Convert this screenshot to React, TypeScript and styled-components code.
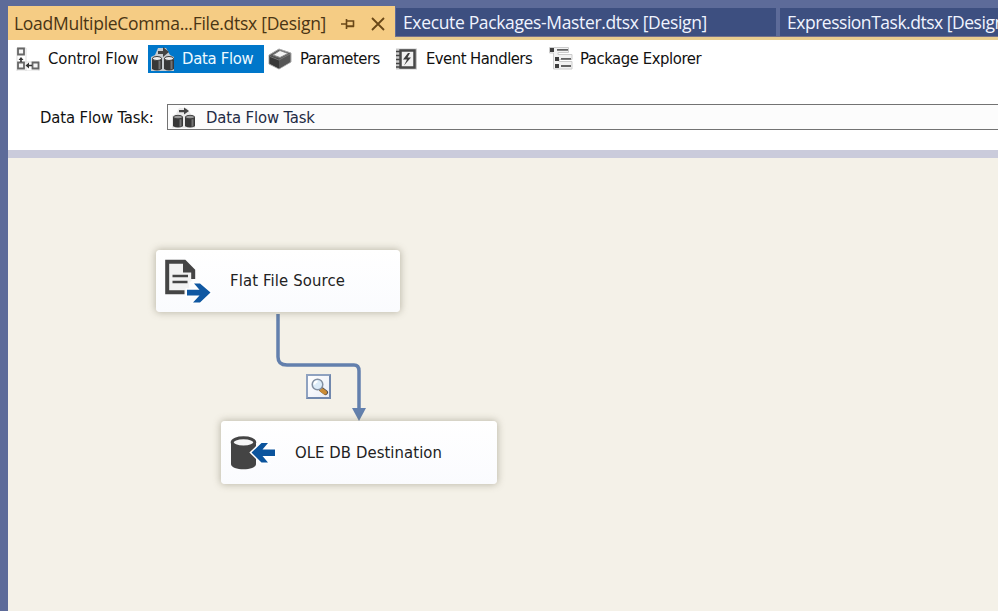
import React from 'react';
import styled, { createGlobalStyle } from 'styled-components';

const Global = createGlobalStyle`
  *{box-sizing:border-box}
  body{margin:0;overflow:hidden;background:#5d6b99}
  svg{display:block;flex:none}
`;
const Shell = styled.div`
  width:998px;height:611px;padding:6px 0 0 8px;overflow:hidden;
  display:flex;flex-direction:column;background:#5d6b99;
`;
const TabStrip = styled.header`
  height:34px;flex:none;display:flex;align-items:flex-start;
  background:linear-gradient(#5d6b99 30px,#75718a 30px,#75718a 31px,#e9cd8e 31px);
`;
const Tab = styled.div<{ $width: number; $active?: boolean; $gap?: number; $spacing: number }>`
  flex:none;width:${p => p.$width}px;height:${p => (p.$active ? 34 : 28)}px;
  margin-top:${p => (p.$active ? 0 : 2)}px;margin-right:${p => p.$gap ?? 0}px;
  padding-left:${p => (p.$active ? 6 : 7)}px;padding-bottom:${p => (p.$active ? 0 : 1)}px;
  display:flex;align-items:center;white-space:nowrap;
  background:${p => (p.$active ? '#f5cc84' : '#3d4f80')};
  color:${p => (p.$active ? '#4a3514' : '#f0f4ff')};
  font:17.5px/28px "Open Sans","Noto Sans",sans-serif;letter-spacing:${p => p.$spacing}px;
`;
const TabTitle = styled.span<{ $width?: number }>`width:${p => (p.$width ? p.$width + 'px' : 'auto')};flex:none;`;
const TabButtons = styled.div`display:flex;align-items:center;gap:15px;margin-left:13px;padding-top:1px;`;
const Header = styled.section`height:110px;flex:none;background:#fff;`;
const ViewBar = styled.nav`height:38px;padding-top:5px;display:flex;`;
const View = styled.div<{ $width: number; $pad: number; $gap: number; $spacing: number; $selected?: boolean }>`
  flex:none;width:${p => p.$width}px;height:28px;padding:0 0 1px ${p => p.$pad}px;
  display:flex;align-items:center;gap:${p => p.$gap}px;white-space:nowrap;
  background:${p => (p.$selected ? '#0077ca' : 'transparent')};color:${p => (p.$selected ? '#eefaff' : '#111')};
  font:16.5px/26px "DejaVu Sans Condensed","DejaVu Sans",sans-serif;letter-spacing:${p => p.$spacing}px;
`;
const TaskRow = styled.div`
  margin-top:26px;display:flex;align-items:center;padding-left:32px;color:#111;
  font:16.5px/24px "DejaVu Sans Condensed","DejaVu Sans",sans-serif;letter-spacing:-.12px;
`;
const TaskLabel = styled.label`width:127px;flex:none;padding-top:2px;`;
const TaskSelect = styled.div`
  flex:1;height:26px;border:1px solid #737373;border-right:0;background:#fcfcfc;
  padding:0 0 0 4px;display:flex;align-items:center;gap:10px;color:#1f2b45;
`;
const TaskName = styled.span`padding-top:2px;`;
const Splitter = styled.div`height:8px;flex:none;background:#cacbdb;`;
const Canvas = styled.main`position:relative;flex:1;background:#f4f1e8;`;
const Node = styled.div<{ $x: number; $y: number; $w: number; $h: number; $spacing: number }>`
  position:absolute;left:${p => p.$x}px;top:${p => p.$y}px;width:${p => p.$w}px;height:${p => p.$h}px;
  padding-left:8px;display:flex;align-items:center;gap:18px;border-radius:4px;
  background:linear-gradient(#fff,#fafbfe);box-shadow:0 0 7px 1px rgba(105,100,75,.38);color:#222;
  font:16.5px/24px "DejaVu Sans Condensed","DejaVu Sans",sans-serif;letter-spacing:${p => p.$spacing}px;
`;
const Link = styled.svg`position:absolute;left:265px;top:154px;`;
const Viewer = styled.div`
  position:absolute;left:298px;top:216px;width:25px;height:25px;
  border:2px solid #7188ad;border-top-color:#8fa2c0;border-left-color:#8fa2c0;background:linear-gradient(135deg,#fff,#e9edf6);
`;

const Pin = () => <svg width="15" height="12" viewBox="0 0 15 12" fill="none" stroke="#694717" strokeWidth="1.6"><path d="M0 6h5M5.5 1v10M5.5 3h7v5h-7M5.5 8.4h7.5" /></svg>;
const Close = () => <svg width="14" height="14" viewBox="0 0 14 14" stroke="#694717" strokeWidth="1.8"><path d="M1 1l12 12M13 1L1 13" /></svg>;
const ControlFlowIcon = () => (
  <svg width="24" height="24" viewBox="0 0 24 24" fill="none">
    <path d="M1 1h9v23M1 1v23h22v-9H9" stroke="#ddd" strokeWidth="1" />
    <g stroke="#666" strokeWidth="1.8"><path d="M2 1.500h6v6H2zM2 15.5h6v6H2zM16.5 15.5h6v6h-6z" fill="#f6f6f6" /></g>
    <path d="M5 15v-3M11 18.5h5" stroke="#333" strokeWidth="1.6" /><path d="M5 10l2.500 3h-5zM9.5 18.5l3.500-3v6z" fill="#333" />
  </svg>
);
const DataFlowIcon = ({ light }: { light?: boolean }) => (
  <svg width="24" height={light ? 24 : 21} viewBox="0 0 24 24" preserveAspectRatio="none">
    <path d="M0 10l4-2 3-7h8l4 7 4 2v14H0z" fill={light ? '#c8ccd0' : '#e9e9e9'} />
    <path d={light ? 'M7 7V4h5V0l6 5-6 5V7z' : 'M7 6V3.500h5V.500l5 4-5 4V6z'} fill="#444" />
    <path d="M1 11h10v11q-5 3-10 0zM13 11h10v11q-5 3-10 0z" fill="#383838" />
    <path d="M7.5 14h2v8l-2 .5zM19.500 14h2v8l-2 .5z" fill="#737373" />
    <g fill={light ? '#eee' : '#999'} stroke="#3c3c3c"><ellipse cx="6" cy="11.500" rx="4.500" ry="2" /><ellipse cx="18" cy="11.500" rx="4.500" ry="2" /></g>
  </svg>
);
const BoxIcon = () => (
  <svg width="24" height="22" viewBox="0 0 24 22" strokeLinejoin="round">
    <path d="M1 7L11 1l12 4v9l-12 7-10-5z" fill="#5d5d5d" stroke="#aaa" />
    <path d="M1.500 7.500L11 11v9.500l-9.500-5z" fill="#383838" /><path d="M11 11l11-5v8l-11 6.500z" fill="#565656" />
    <path d="M5 7l7-4.500 8 3-8 4z" fill="#f4f4f4" stroke="#888" /><path d="M2 8.500l9 3.500 11-6" fill="none" stroke="#777" />
  </svg>
);
const EventIcon = () => (
  <svg width="21" height="22" viewBox="0 0 21 22">
    <path d="M0 .5h21v21H0z" fill="#c9c9c9" /><path d="M4.500 2.500h14v17h-14z" fill="#f0f0f0" stroke="#474747" strokeWidth="2.500" />
    <path d="M0 3.500h4M0 7.500h4M0 11.500h4M0 15.500h4M0 19h4" stroke="#444" strokeWidth="1.500" />
    <path d="M12 5L7 11.500h4L8 17.500l7-8h-3.500L14 5z" fill="#3c3c3c" />
  </svg>
);
const ExplorerIcon = () => (
  <svg width="24" height="23" viewBox="0 0 24 23">
    <path d="M.5.5h19v5H9v2h14v5H10v2h13v7.500H4.500V6h-4z" fill="#f2f2f2" stroke="#ccc" />
    <path d="M1 1h4v4H1zM6 10h4v4H6zM6 17h4v4H6z" fill="#3e3e3e" />
    <path d="M8 2.800h11M12 11.800h10M12 19h10" stroke="#636363" strokeWidth="1.800" />
  </svg>
);
const FileIcon = () => (
  <svg width="48" height="46" viewBox="0 0 48 46">
    <path d="M3 3.500h17.500l9 9V21L25 25v11H3z" fill="#f3f3f3" />
    <path d="M20.500 34.200H3.200V3.700h17.300l8.700 8.800V21" fill="none" stroke="#454545" strokeWidth="4" />
    <path d="M19 2.500v12h12z" fill="#454545" /><path d="M8.500 18h15.500M8.500 24h15" stroke="#454545" strokeWidth="2.400" />
    <path d="M23 31.800h12.500L30 25.500h6L46.500 34.500 36 44.500h-7l6.500-7H23z" fill="#1058a2" stroke="#fff" strokeWidth="3" paintOrder="stroke" />
  </svg>
);
const DatabaseIcon = () => (
  <svg width="48" height="38" viewBox="0 0 48 38">
    <path d="M2 8v22c0 7 25 7 25 0V8" fill="#444" /><ellipse cx="14.500" cy="8.300" rx="11.300" ry="4.600" fill="#f6f6f6" stroke="#444" strokeWidth="3" />
    <path d="M46 15.500H33.500l5.500-6.500h-6.500L22.500 18.500 32.500 28.500h6.500l-5.500-6.500H46z" fill="#0b549d" stroke="#fff" strokeWidth="3" paintOrder="stroke" />
  </svg>
);
const Magnifier = () => (
  <svg width="21" height="21" viewBox="0 0 21 21">
    <path d="M13.500 13.500l4 3" stroke="#4f4a4d" strokeWidth="5" strokeLinecap="round" /><path d="M13.500 14l3.500 2.500" stroke="#cb8c35" strokeWidth="4" strokeLinecap="round" />
    <circle cx="9.500" cy="8.500" r="5.300" fill="#dcecf9" stroke="#8390a2" strokeWidth="1.500" /><path d="M6.500 8.500q0-3 3-3" stroke="#fff" strokeWidth="2" fill="none" />
  </svg>
);

export default function App() {
  return (
    <>
      <Global />
      <Shell>
        <TabStrip>
          <Tab $active $width={387} $gap={1} $spacing={-0.27}>
            <TabTitle $width={314}>LoadMultipleComma...File.dtsx [Design]</TabTitle>
            <TabButtons><Pin /><Close /></TabButtons>
          </Tab>
          <Tab $width={380} $gap={4} $spacing={-0.35}><TabTitle>Execute Packages-Master.dtsx [Design]</TabTitle></Tab>
          <Tab $width={230} $spacing={-0.48}><TabTitle>ExpressionTask.dtsx [Design]</TabTitle></Tab>
        </TabStrip>
        <Header>
          <ViewBar>
            <View $width={140} $pad={8} $gap={8} $spacing={-0.15}><ControlFlowIcon />Control Flow</View>
            <View $selected $width={116} $pad={3} $gap={7} $spacing={-0.3}><DataFlowIcon light />Data Flow</View>
            <View $width={131} $pad={4} $gap={8} $spacing={-0.52}><BoxIcon />Parameters</View>
            <View $width={154} $pad={1} $gap={9} $spacing={-0.52}><EventIcon />Event Handlers</View>
            <View $width={170} $pad={0} $gap={7} $spacing={-0.42}><ExplorerIcon />Package Explorer</View>
          </ViewBar>
          <TaskRow>
            <TaskLabel>Data Flow Task:</TaskLabel>
            <TaskSelect><DataFlowIcon /><TaskName>Data Flow Task</TaskName></TaskSelect>
          </TaskRow>
        </Header>
        <Splitter />
        <Canvas>
          <Link width="110" height="112" viewBox="0 0 110 112">
            <path d="M5 2v43q0 8 9 8h67q5 0 5 6v39" fill="none" stroke="#6380ad" strokeWidth="3.500" />
            <path d="M79 96h14l-7 13z" fill="#6380ad" />
          </Link>
          <Node $x={148} $y={92} $w={244} $h={62} $spacing={0.15}><FileIcon />Flat File Source</Node>
          <Node $x={213} $y={263} $w={276} $h={63} $spacing={0.08}><DatabaseIcon />OLE DB Destination</Node>
          <Viewer><Magnifier /></Viewer>
        </Canvas>
      </Shell>
    </>
  );
}
